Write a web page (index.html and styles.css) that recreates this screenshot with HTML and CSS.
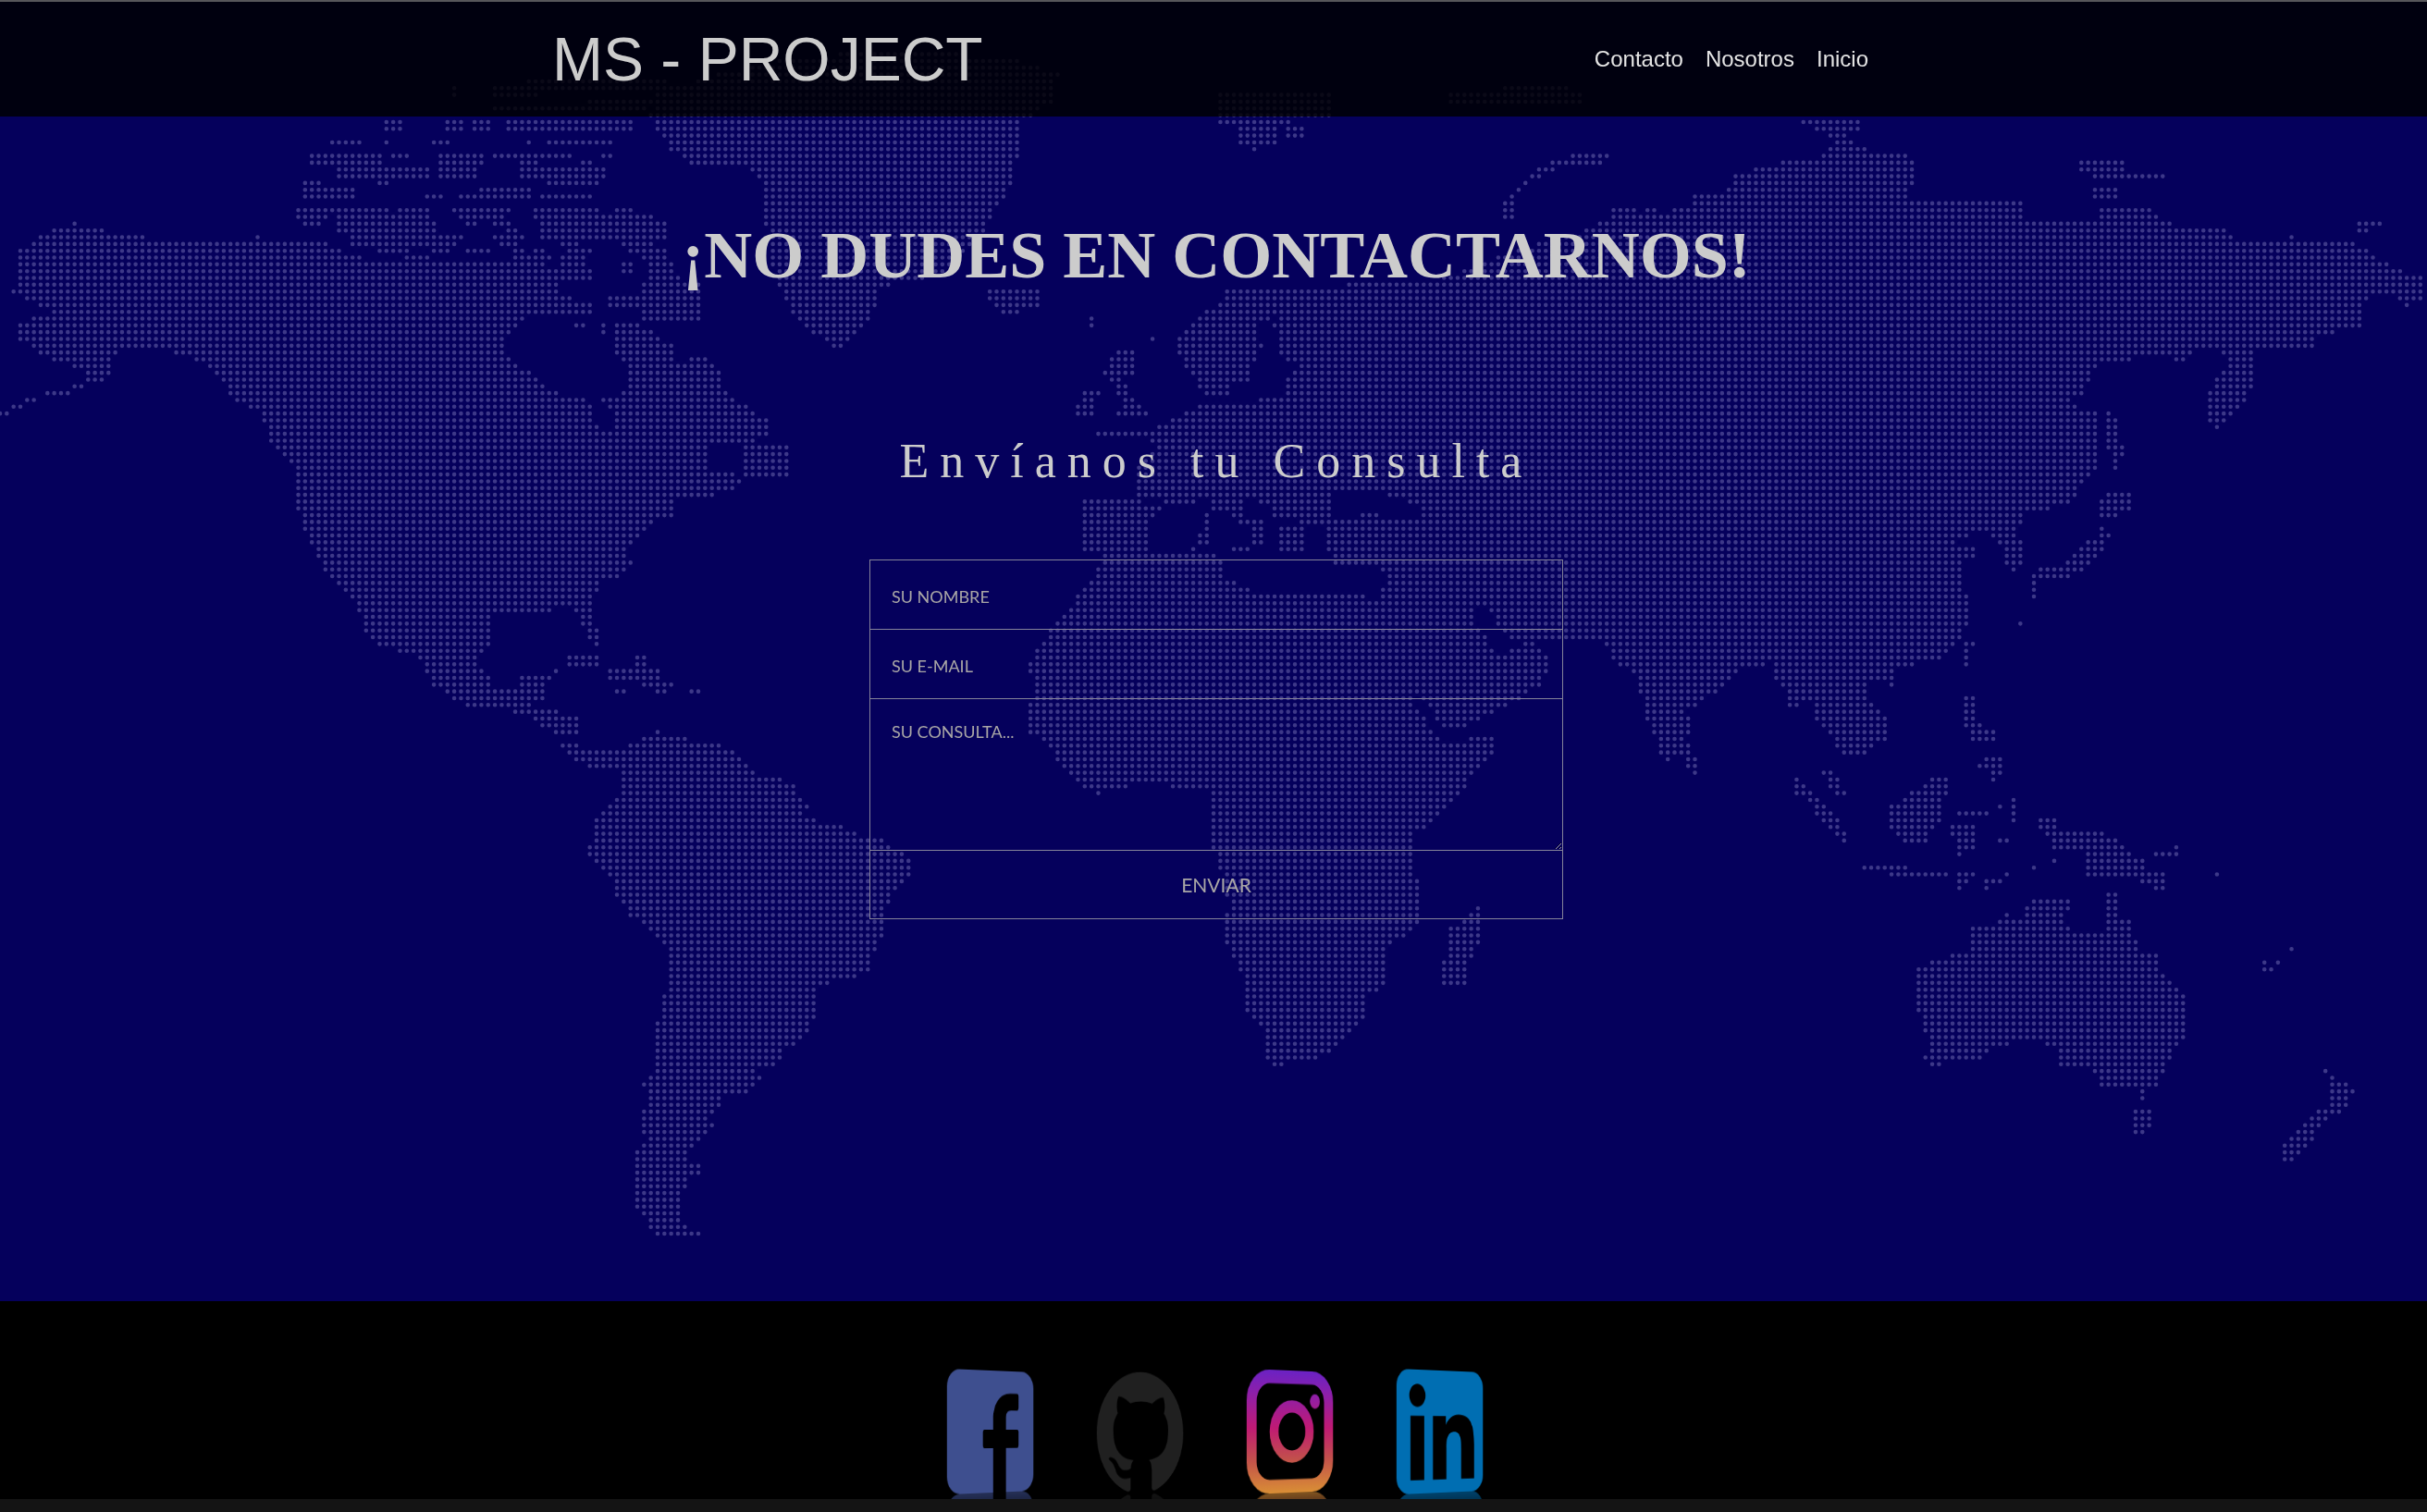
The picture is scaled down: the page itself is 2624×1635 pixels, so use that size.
FILE: index.html
```html
<!DOCTYPE html>
<html lang="es">
<head>
<meta charset="utf-8">
<title>MS - PROJECT</title>
<link rel="stylesheet" href="styles.css">
</head>
<body>
<div class="hero">
  <canvas id="map" class="hero-map" width="2624" height="1407"></canvas>
  <header class="topbar">
    <a class="brand" href="#">MS - PROJECT</a>
    <nav class="nav">
      <a href="#">Contacto</a>
      <a href="#">Nosotros</a>
      <a href="#">Inicio</a>
    </nav>
  </header>
  <main class="content">
    <h1 class="title">¡NO DUDES EN CONTACTARNOS!</h1>
    <h2 class="subtitle">Envíanos tu Consulta</h2>
    <form class="contact">
      <input class="field" type="text" placeholder="SU NOMBRE">
      <input class="field" type="email" placeholder="SU E-MAIL">
      <textarea class="field field-area" placeholder="SU CONSULTA..."></textarea>
      <button class="send" type="button">ENVIAR</button>
    </form>
  </main>
</div>
<footer class="social">
  <svg class="icon" viewBox="0 0 100 100" aria-label="Facebook">
    <path fill="#3e4f8f" d="M14 0H86A14 14 0 0 1 100 14V86A14 14 0 0 1 86 100H67V63.7H80Q82 63.7 82 61V50Q82 48.5 80 48.5H67V38Q67 32.6 73 32.6H80Q82 32.6 82 30V21Q82 18.6 80 18.6H72C60 18.6 52 27 52 40V48.5H42Q40 48.5 40 51V61Q40 63.7 42 63.7H52V100H14A14 14 0 0 1 0 86V14A14 14 0 0 1 14 0Z"/>
  </svg>
  <svg class="icon" viewBox="0 0 24 24" aria-label="GitHub">
    <path fill="#202020" d="M12 .297c-6.63 0-12 5.373-12 12 0 5.303 3.438 9.8 8.205 11.385.6.113.82-.258.82-.577 0-.285-.01-1.04-.015-2.04-3.338.724-4.042-1.61-4.042-1.61C4.422 18.07 3.633 17.7 3.633 17.7c-1.087-.744.084-.729.084-.729 1.205.084 1.838 1.236 1.838 1.236 1.07 1.835 2.809 1.305 3.495.998.108-.776.417-1.305.76-1.605-2.665-.3-5.466-1.332-5.466-5.93 0-1.31.465-2.38 1.235-3.22-.135-.303-.54-1.523.105-3.176 0 0 1.005-.322 3.3 1.23.96-.267 1.98-.399 3-.405 1.02.006 2.04.138 3 .405 2.28-1.552 3.285-1.23 3.285-1.23.645 1.653.24 2.873.12 3.176.765.84 1.23 1.91 1.23 3.22 0 4.61-2.805 5.625-5.475 5.92.42.36.81 1.096.81 2.22 0 1.606-.015 2.896-.015 3.286 0 .315.21.69.825.57C20.565 22.092 24 17.592 24 12.297c0-6.627-5.373-12-12-12"/>
  </svg>
  <svg class="icon" viewBox="0 0 100 100" aria-label="Instagram">
    <defs>
      <linearGradient id="ig" gradientUnits="userSpaceOnUse" x1="0" y1="0" x2="0" y2="100">
        <stop offset="0" stop-color="#6a22c4"/>
        <stop offset=".2" stop-color="#8f1fa8"/>
        <stop offset=".47" stop-color="#c01a74"/>
        <stop offset=".72" stop-color="#c24f4c"/>
        <stop offset="1" stop-color="#d98e35"/>
      </linearGradient>
    </defs>
    <rect x="5.5" y="5.5" width="89" height="89" rx="20" fill="none" stroke="url(#ig)" stroke-width="11"/>
    <circle cx="51" cy="50" r="20.5" fill="none" stroke="url(#ig)" stroke-width="10"/>
    <circle cx="78" cy="25" r="6" fill="url(#ig)"/>
  </svg>
  <svg class="icon" viewBox="0 0 24 24" aria-label="LinkedIn">
    <rect width="24" height="24" rx="3.2" fill="#006eb2"/>
    <path fill="#000" transform="translate(-.06 -.83) scale(1.05 1.087)" d="M20.447 20.452h-3.554v-5.569c0-1.328-.027-3.037-1.852-3.037-1.853 0-2.136 1.445-2.136 2.939v5.667H9.351V9h3.414v1.561h.046c.477-.9 1.637-1.85 3.37-1.85 3.601 0 4.267 2.37 4.267 5.455v6.286zM5.337 7.433c-1.144 0-2.063-.926-2.063-2.065 0-1.138.92-2.063 2.063-2.063 1.14 0 2.064.925 2.064 2.063 0 1.139-.925 2.065-2.064 2.065zm1.782 13.019H3.555V9h3.564v11.452z"/>
  </svg>
</footer>
<script src="map.js"></script>
</body>
</html>
```

FILE: styles.css
```css
* { box-sizing: border-box; }

html {
  background: #141414;
}

body {
  margin: 0;
  font-family: "Liberation Sans", Arial, sans-serif;
}

a {
  color: inherit;
  text-decoration: none;
}

.hero {
  position: relative;
  height: 1407px;
  background: #05005c;
  overflow: hidden;
}

.hero-map {
  position: absolute;
  top: 0;
  left: 0;
  filter: blur(.6px);
}

.topbar {
  position: relative;
  height: 126px;
  display: flex;
  align-items: center;
  justify-content: space-between;
  padding: 0 604px 0 597px;
  background: rgba(0, 0, 0, .83);
  border-top: 2px solid #56565a;
}

.brand {
  font-size: 66px;
  line-height: 1;
  color: #cccccc;
}

.nav {
  display: flex;
  gap: 24px;
  font-size: 24px;
  color: #e4e4e4;
}

.content {
  position: relative;
  display: flex;
  flex-direction: column;
  align-items: center;
  padding-left: 6px;
}

.title {
  margin: 106px 0 0;
  font: bold 72px/88px "Liberation Serif", "Times New Roman", serif;
  color: #cccccc;
}

.subtitle {
  margin: 147px 0 0;
  font: normal 52px/64px "Liberation Serif", "Times New Roman", serif;
  letter-spacing: 12px;
  color: #cccccc;
}

.contact {
  width: 750px;
  margin-top: 74px;
  display: flex;
  flex-direction: column;
}

.field {
  display: block;
  width: 100%;
  height: 76px;
  margin: 0 0 -1px;
  padding: 4px 23px 0;
  background: transparent;
  border: 1px solid #858399;
  border-radius: 0;
  outline: none;
  font: 18px "Lato", sans-serif;
  color: #a9a6a6;
}

.field::placeholder {
  color: #a9a6a6;
  opacity: 1;
}

.field-area {
  height: 165px;
  padding: 24px 23px;
}

.send {
  height: 75px;
  background: transparent;
  border: 1px solid #858399;
  border-radius: 0;
  font: 21px "Lato", sans-serif;
  color: #a9a6a6;
}

.social {
  height: 214px;
  display: flex;
  justify-content: center;
  gap: 30px;
  padding: 75px 0 0 6px;
  background: #000;
}

.icon {
  width: 132px;
  height: 132px;
  transform: perspective(1500px) rotateY(45deg);
  -webkit-box-reflect: below 0 linear-gradient(transparent 68%, rgba(255, 255, 255, .6));
}
```

FILE: map.js
```js
// Dotted world map: each grid point is kept when it falls on land.
var F = {
  full: [0, 0, 1, 1],
  z1: [0, 0, 1.425, 3],
  z3: [920, 590, 1.96, 3],
  z5: [0, 120, 1.568, 2.24],
  z6: [600, 800, 3, 2.8],
  z7: [1700, 120, 1.697, 2.24],
  z8: [1800, 800, 1.903, 3],
  z9: [1000, 120, 1.96, 3],
  z10: [1000, 980, 2.24, 3],
  z11: [1500, 500, 3, 3]
};

function pts(frame, list) {
  var f = F[frame], out = [];
  for (var i = 0; i < list.length; i += 2) {
    out.push([f[0] + list[i] / f[2], f[1] + list[i + 1] / f[3]]);
  }
  return out;
}

var land = [], water = [];

function add(parts) {
  var poly = [];
  for (var i = 0; i < parts.length; i += 2) poly = poly.concat(pts(parts[i], parts[i + 1]));
  land.push(poly);
}

function rects(frame, list) {
  for (var i = 0; i < list.length; i += 4) {
    add([frame, [list[i], list[i + 1], list[i + 2], list[i + 1], list[i + 2], list[i + 3], list[i], list[i + 3]]]);
  }
}

// North America
add(['z5', [125,272,180,292,260,310,330,320,390,322,430,305,510,310,560,322,580,340,620,350,620,365,700,370,770,365,850,370,950,375,1000,375,1005,410,950,420,950,440,1015,490,1000,500,900,490,880,520,850,570,880,620,915,650,950,690,1000,700,1000,740,1030,790,1040,740,1020,700,1060,680,1060,620,1040,590,1040,530,1100,530,1140,570,1150,610,1190,590,1220,620,1230,680,1275,720,1300,750,1300,790,1250,810,1200,815,1200,880,1250,880,1255,910,1210,930,1140,935,1140,985,1095,1000,1090,1030,1060,1060,1075,1090,1050,1130,1020,1140,1015,1170,1000,1190,1000,1220,1020,1265,1020,1290,1010,1295,985,1250,975,1200,910,1215,830,1225,830,1300,810,1330,815,1350,840,1395,880,1395,885,1370,945,1355,925,1400,925,1430,880,1445,980,1460,980,1510,940,1510,900,1470,860,1450,790,1440,740,1400,720,1360,710,1320,650,1300,620,1260,600,1180,550,1110,520,1040,505,960,505,880,460,800,440,730,400,700,350,620,310,590,260,575,240,575,190,590,190,640,160,660,110,690,60,700,0,745,0,730,20,715,60,685,110,680,150,640,110,610,80,600,55,570,25,555,30,515,85,490,60,470,15,440,35,425,25,345,60,310,90,290]]);
rects('z5', [1055,365,1075,400,1090,410,1195,510,1030,450,1100,480,940,455,1010,495,975,515,995,530,1020,515,1030,545,1040,515,1090,530,1260,810,1335,885,965,1318,1015,1345,1030,1355,1115,1375,1075,1320,1095,1345,1090,1380,1140,1395,1040,1398,1060,1412,1110,1398,1130,1412,1168,1398,1190,1412]);

// Arctic Canada
rects('z1', [595,393,622,430,680,393,720,430,730,393,755,430,780,380,975,430,510,458,560,475,585,458,600,475,660,440,690,475,710,440,730,455,750,440,785,455,840,440,945,475,810,440,820,475,480,500,590,540,620,485,635,500,605,500,632,520,670,505,745,540,755,505,880,520,920,505,945,520,800,525,830,540,895,525,915,540,520,548,660,585,670,548,735,585,795,548,935,585,460,592,495,607,575,592,600,607,845,592,920,607,470,615,545,650,740,615,820,632,650,635,680,650,710,635,820,650,830,635,915,650,450,660,600,695,615,660,665,695,690,660,785,695,825,660,925,695,945,660,975,695,450,703,505,720,520,703,660,720,705,703,780,720,825,703,1005,720,470,725,495,742,520,725,670,742,720,725,735,742,760,725,785,742,835,725,1025,742,520,745,675,762,775,745,800,762,835,745,1025,762,540,765,715,782,760,765,810,782,835,765,1025,782,540,788,705,805,770,788,800,805,865,788,890,805,960,788,1010,805,575,810,630,825,665,810,690,825,720,810,755,825,785,810,810,825,820,810,840,825,875,810,910,825,965,810,1030,825,625,833,660,850,790,833,850,850,865,833,905,850,990,833,1030,850,635,855,685,870,730,855,755,870,775,855,845,870,865,855,905,870,960,855,975,870,1000,855,1040,870,960,878,975,895,1000,878,1040,895,1000,900,1045,915,690,285,705,320,718,330,735,345,762,280,830,322,760,348,860,372,835,285,1040,305,905,310,1050,345,810,250,1030,275,865,350,1000,372,800,220,1030,240]);

// Central and South America
add(['z5', [950,1530,985,1530,985,1562,960,1562]]);
add(['z6', [15,8,78,8,100,30,190,30,240,40,220,90,130,85,65,65,40,45,15,25]]);
add(['z6', [240,5,300,-10,330,-28,360,-10,420,-5,470,5,510,5,540,10,580,35,605,60,625,80,650,100,735,115,780,140,800,180,825,200,800,225,845,240,935,265,975,285,1060,300,1085,325,1130,345,1150,365,1150,410,1130,430,1105,450,1085,490,1065,530,1065,595,1040,610,1040,635,1020,650,1020,695,975,715,885,735,860,755,845,775,845,840,825,880,800,900,780,920,750,940,735,965,710,985,640,990,670,1020,640,1045,625,1065,540,1085,540,1125,470,1130,515,1165,490,1190,470,1205,470,1225,430,1245,430,1275,470,1285,470,1310,430,1320,430,1345,405,1370,405,1450,430,1470,470,1490,470,1500,325,1500,305,1470,285,1445,285,1425,262,1410,262,1245,285,1225,305,1200,285,1185,285,1120,305,1100,305,1080,285,1060,285,1040,305,1020,325,1000,325,855,350,835,350,770,370,750,370,630,350,610,305,570,265,550,240,530,220,490,195,465,195,430,175,405,155,385,130,365,110,345,110,322,135,305,130,240,175,205,195,180,220,120,220,90,200,80,240,50]]);

// Greenland and northern islands
add(['full', [702,125,712,100,780,78,860,62,960,55,1080,60,1144,78,1138,110,1100,135,1102,163,1094,197,1087,217,1071,223,1071,240,1061,253,1030,290,1000,300,950,312,944,339,925,365,906,377,861,348,839,307,826,236,826,200,800,177,744,177,723,160]]);
add(['z9', [120,565,240,580,240,630,180,660,160,650,130,610]]);
rects('z9', [345,670,355,705,475,738,485,750,620,20,770,50,660,55,745,105,760,55,810,100,690,120,710,135]);
rects('full', [1316,102,1442,125,1563,96,1712,113,1623,88,1700,96]);
add(['z9', [1420,125,1455,125,1455,155,1410,180,1340,190,1300,220,1270,250,1250,290,1250,360,1220,360,1220,300,1250,250,1280,205,1320,170,1360,145]]);

// Eurasia
add([
  'z9', [645,565,780,565,840,565,1040,560,1100,540,1200,480,1290,430,1380,400,1450,340,1450,300,1560,300],
  'z7', [70,225,120,225,120,245,150,225,160,245,215,230,215,195,235,190,235,205,290,190,290,160,360,130,400,120,450,110,470,85,480,75,470,60,450,45,430,30,380,15,500,15,530,30,520,50,500,60,520,75,545,95,600,95,630,120,630,185,605,195,620,210,750,210,830,225,830,260,860,270,960,265,970,240,1060,240,1080,270,1200,290,1215,320,1300,320,1320,305,1350,320,1440,320,1460,340,1500,375,1565,405,1565,450,1530,480,1505,450,1480,440,1450,470,1450,530,1370,540,1360,575,1250,585,1250,670,1215,735,1180,785,1160,740,1160,690,1190,630,1210,590,1140,575,1130,610,1100,600,1085,595,990,605,960,625,940,680,910,700,945,730,970,730,970,850,940,890,915,950,830,980,815,1020,770,1020,820,1020,830,1080,820,1115,800,1115,785,1060,760,1025,720,1030,690,1050,720,1060,745,1060,745,1085,720,1090,720,1160,730,1165,730,1235,710,1280,690,1310,670,1330,630,1340,590,1355,590,1395,575,1395,570,1370,545,1380,545,1420,585,1480,585,1510,540,1560,490,1568,475,1510,440,1480,440,1568],
  'z8', [325,85,350,100,365,150,380,180,345,175,330,130,320,100],
  'z11', [1400,985,1380,960,1375,810,1370,770,1320,790,1290,790,1285,745,1250,700,1240,650,1210,660,1125,680,1105,720,1060,745,1015,785,960,800,990,825,995,860,970,900,985,940,1015,980,1015,1015,985,1015,955,985,960,940,925,965,890,965,880,900,850,860,830,790,810,720,800,680,740,660,720,610,690,580,570,580,470,590,515,630,535,655,510,690,490,730,420,770,380,790,350,815,250,855,170,855,130,790,100,750,60,690,20,640,0,600],
  'z3', [1125,190,1130,80,1060,60,1020,55,1005,5],
  'z9', [845,1345,745,1325,725,1280,690,1250,600,1255,570,1270,445,1265,450,1225,440,1170,490,1080,470,1060,360,1055,350,1040,470,1035,500,1020,520,1010,545,975,590,955,640,955,690,950,715,935,760,920,760,860,790,830,770,810,745,780,740,690,745,670,720,680,700,690,715,770,700,810,690,880,650,890,640,930,600,930,575,900,580,865,550,830,535,770,530,745,545,715,575,670,620,630]
]);
add(['z9', [335,1265,445,1265,510,1280,510,1295,480,1320,470,1380,470,1430,335,1430]]);
add(['z9', [605,1265,670,1265,670,1300,700,1340,725,1370,725,1400,695,1400,695,1360,660,1320,605,1290]]);
rects('z9', [590,1310,610,1400,575,1365,600,1400,645,1405,690,1430,750,1340,810,1430,555,1412,570,1428,660,1330,725,1345]);
add(['z9', [405,780,440,780,455,835,435,860,420,870,440,930,485,985,385,1000,420,950,400,900,375,850,385,820]]);
add(['z9', [330,895,375,895,380,920,355,950,355,990,320,990,320,960,340,930]]);

// Asian islands
add(['z7', [925,125,1015,125,1015,155,1090,155,1090,170,1000,170,925,150]]);
rects('z7', [955,190,1005,215,1440,270,1490,285,1440,285,1465,300]);
add(['z7', [985,715,1000,760,1015,830,990,890,985,830,975,770]]);
add(['z7', [985,915,1030,930,1025,960,1000,985,965,990,990,1030,975,1060,960,1090,915,1130,850,1130,850,1180,835,1180,840,1130,860,1105,910,1090,930,1055,960,1030,960,965]]);
add(['z7', [825,1220,830,1250,800,1280,815,1255]]);
add(['z7', [710,1290,735,1290,730,1345,710,1340]]);
add(['z7', [720,1405,745,1420,745,1480,780,1500,780,1530,740,1530,715,1490,710,1420]]);

// Africa, Madagascar
add([
  'z3', [530,25,600,25,650,25,770,25,785,55,790,95,840,140,870,165,905,165,905,145,960,145,1010,165,1050,165,1060,145,1085,165,1125,185,1140,280,1165,370,1185,440,1200,520,1235,610,1260,650,1320,620,1358,620,1358,670,1340,720,1320,740,1300,800,1280,830,1240,890,1200,930,1190,980],
  'z10', [1205,50,1175,90,1125,130,1110,160,1125,200,1125,240,1110,270,1075,280,1075,330,1040,400,1010,440,960,490,865,515,840,515,820,465,820,400,805,380,770,320,770,220,755,180,725,115,725,45,740,0],
  'z3', [760,940,760,790,690,790,640,760,590,780,520,805,490,780,445,720,415,640,375,600,375,560,385,460,375,385,400,320,430,250,470,190,490,140,520,100]
]);
add(['z10', [1315,20,1350,0,1355,95,1340,115,1335,160,1320,180,1320,250,1300,270,1250,270,1245,180,1265,150,1265,70,1300,50]]);

// South-east Asia and Oceania
add(['z11', [1310,1020,1340,1020,1370,1065,1420,1110,1470,1170,1495,1240,1470,1225,1440,1205,1420,1180,1380,1120,1350,1090,1310,1060]]);
add(['z8', [380,0,450,0,430,25,420,50,395,50,385,20]]);
add(['z8', [400,410,505,410,505,425,590,430,590,445,495,445,400,422]]);
add(['z8', [540,125,590,125,590,160,575,190,575,265,545,300,550,330,495,330,465,300,455,260,455,210,490,190,520,160]]);
add(['z8', [590,285,640,285,640,300,630,345,640,350,610,375,590,370,610,340,580,300]]);
add(['z8', [650,60,700,60,695,90,685,130,670,130,665,100,635,90]]);
add(['z8', [760,255,800,255,810,300,890,300,935,320,950,350,965,370,990,390,990,425,985,445,935,440,860,440,870,415,870,385,855,360,800,355,785,320,770,300]]);
rects('z8', [1010,362,1060,378,1050,342,1062,362,980,430,1030,465,1010,470,1032,488,605,430,645,445,690,430,715,445,598,452,620,465,660,452,690,465,605,472,618,488,648,472,672,488,605,232,670,246,680,208,690,225,705,208,728,246,715,190,728,202,715,255,728,270,1122,430,1145,442,800,385,812,400,758,407,770,422,565,100,575,112,565,55,575,70,580,35,590,48,595,12,605,25,650,12,660,25,590,275,640,288,680,320,715,335,1222,692,1228,705,1232,715,1245,728,1260,715,1270,728,1232,738,1255,750,1286,670,1298,684,690,560,715,575]);
add(['z8', [760,515,838,515,838,550,825,575,825,590,838,605,838,625,868,630,900,630,912,590,912,500,935,500,935,585,965,585,965,630,978,650,978,690,1005,690,1020,715,1020,745,1035,765,1050,785,1062,810,1075,845,1075,975,1048,1000,1048,1030,1032,1050,1032,1075,1020,1095,1020,1120,990,1140,990,1165,970,1165,970,1140,912,1140,885,1120,885,1085,870,1060,843,1055,815,1055,815,1005,785,985,715,985,670,1000,660,1030,585,1050,550,1055,535,1030,550,1000,550,980,535,960,520,880,510,850,522,830,522,740,550,715,595,695,632,680,632,610,680,590,745,570,745,545]]);
add(['z8', [955,1195,1005,1195,1005,1235,990,1275,970,1275,955,1250]]);
add(['z8', [1345,1045,1365,1065,1395,1110,1420,1130,1408,1190,1395,1205,1365,1230,1350,1250,1325,1310,1310,1340,1295,1365,1270,1365,1262,1335,1285,1300,1305,1265,1330,1210,1360,1190,1370,1140,1360,1090]]);

// Inland seas
water.push(pts('z9', [870,1245,940,1240,1000,1250,1060,1300,1040,1330,1000,1325,940,1300,870,1330]));
water.push(pts('z11', [275,475,320,475,360,530,430,590,370,620,335,590,290,530]));

function inside(poly, x, y) {
  var hit = false;
  for (var i = 0, j = poly.length - 1; i < poly.length; j = i++) {
    var a = poly[i], b = poly[j];
    if ((a[1] > y) !== (b[1] > y) && x < (b[0] - a[0]) * (y - a[1]) / (b[1] - a[1]) + a[0]) hit = !hit;
  }
  return hit;
}

function any(list, x, y) {
  for (var i = 0; i < list.length; i++) if (inside(list[i], x, y)) return true;
  return false;
}

var canvas = document.getElementById('map');
var ctx = canvas.getContext('2d');
var pitch = 7.33;
ctx.fillStyle = '#3d3888';
ctx.beginPath();
for (var r = 0; r * pitch < canvas.height; r++) {
  for (var c = 0; c * pitch < canvas.width; c++) {
    var x = c * pitch, y = r * pitch;
    if (any(land, x, y) && !any(water, x, y)) {
      ctx.moveTo(x + 2.3, y);
      ctx.arc(x, y, 2.3, 0, Math.PI * 2);
    }
  }
}
ctx.fill();
```
